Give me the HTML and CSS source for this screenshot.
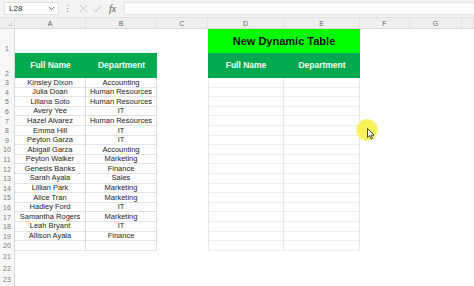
FILE: index.html
```html
<!DOCTYPE html>
<html>
<head>
<meta charset="utf-8">
<link rel="stylesheet" href="styles.css">
</head>
<body>
<div class="app">
  <div class="fbar">
    <div class="namebox"><span>L28</span><svg class="chev" width="7" height="5" viewBox="0 0 7 5"><path d="M0.8 1 L3.5 3.7 L6.2 1" fill="none" stroke="#666" stroke-width="1"/></svg></div>
    <div class="dots">⋮</div>
    <div class="ficons">
      <svg width="9" height="9" viewBox="0 0 9 9"><path d="M1 1 L8 8 M8 1 L1 8" stroke="#c4c4c4" stroke-width="1"/></svg>
      <svg width="10" height="9" viewBox="0 0 10 9"><path d="M1 5 L3.8 7.8 L9 1.2" fill="none" stroke="#c4c4c4" stroke-width="1"/></svg>
      <span class="fx">fx</span>
    </div>
    <div class="finput"></div>
  </div>
  <div class="sheet">
    <div class="row colhead">
      <div class="corner"></div><div>A</div><div>B</div><div>C</div><div>D</div><div>E</div><div>F</div><div>G</div><div></div>
    </div>
    <div class="row r1">
      <div class="rh">1</div><div class="c"></div><div class="c"></div><div class="c"></div><div class="c title">New Dynamic Table</div><div class="c"></div><div class="c"></div><div class="c"></div>
    </div>
    <div class="row r2">
      <div class="rh">2</div><div class="c hd">Full Name</div><div class="c hd">Department</div><div class="c"></div><div class="c hd">Full Name</div><div class="c hd">Department</div><div class="c"></div><div class="c"></div><div class="c"></div>
    </div>
    <div class="row"><div class="rh">3</div><div class="c t">Kinsley Dixon</div><div class="c t">Accounting</div><div class="c"></div><div class="c u"></div><div class="c u"></div><div class="c"></div><div class="c"></div><div class="c"></div></div>
    <div class="row"><div class="rh">4</div><div class="c t">Julia Doan</div><div class="c t">Human Resources</div><div class="c"></div><div class="c u"></div><div class="c u"></div><div class="c"></div><div class="c"></div><div class="c"></div></div>
    <div class="row"><div class="rh">5</div><div class="c t">Liliana Soto</div><div class="c t">Human Resources</div><div class="c"></div><div class="c u"></div><div class="c u"></div><div class="c"></div><div class="c"></div><div class="c"></div></div>
    <div class="row"><div class="rh">6</div><div class="c t">Avery Yee</div><div class="c t">IT</div><div class="c"></div><div class="c u"></div><div class="c u"></div><div class="c"></div><div class="c"></div><div class="c"></div></div>
    <div class="row"><div class="rh">7</div><div class="c t">Hazel Alvarez</div><div class="c t">Human Resources</div><div class="c"></div><div class="c u"></div><div class="c u"></div><div class="c"></div><div class="c"></div><div class="c"></div></div>
    <div class="row"><div class="rh">8</div><div class="c t">Emma Hill</div><div class="c t">IT</div><div class="c"></div><div class="c u"></div><div class="c u"></div><div class="c"></div><div class="c"></div><div class="c"></div></div>
    <div class="row"><div class="rh">9</div><div class="c t">Peyton Garza</div><div class="c t">IT</div><div class="c"></div><div class="c u"></div><div class="c u"></div><div class="c"></div><div class="c"></div><div class="c"></div></div>
    <div class="row"><div class="rh">10</div><div class="c t">Abigail Garza</div><div class="c t">Accounting</div><div class="c"></div><div class="c u"></div><div class="c u"></div><div class="c"></div><div class="c"></div><div class="c"></div></div>
    <div class="row"><div class="rh">11</div><div class="c t">Peyton Walker</div><div class="c t">Marketing</div><div class="c"></div><div class="c u"></div><div class="c u"></div><div class="c"></div><div class="c"></div><div class="c"></div></div>
    <div class="row"><div class="rh">12</div><div class="c t">Genesis Banks</div><div class="c t">Finance</div><div class="c"></div><div class="c u"></div><div class="c u"></div><div class="c"></div><div class="c"></div><div class="c"></div></div>
    <div class="row"><div class="rh">13</div><div class="c t">Sarah Ayala</div><div class="c t">Sales</div><div class="c"></div><div class="c u"></div><div class="c u"></div><div class="c"></div><div class="c"></div><div class="c"></div></div>
    <div class="row"><div class="rh">14</div><div class="c t">Lillian Park</div><div class="c t">Marketing</div><div class="c"></div><div class="c u"></div><div class="c u"></div><div class="c"></div><div class="c"></div><div class="c"></div></div>
    <div class="row"><div class="rh">15</div><div class="c t">Alice Tran</div><div class="c t">Marketing</div><div class="c"></div><div class="c u"></div><div class="c u"></div><div class="c"></div><div class="c"></div><div class="c"></div></div>
    <div class="row"><div class="rh">16</div><div class="c t">Hadley Ford</div><div class="c t">IT</div><div class="c"></div><div class="c u"></div><div class="c u"></div><div class="c"></div><div class="c"></div><div class="c"></div></div>
    <div class="row"><div class="rh">17</div><div class="c t">Samantha Rogers</div><div class="c t">Marketing</div><div class="c"></div><div class="c u"></div><div class="c u"></div><div class="c"></div><div class="c"></div><div class="c"></div></div>
    <div class="row"><div class="rh">18</div><div class="c t">Leah Bryant</div><div class="c t">IT</div><div class="c"></div><div class="c u"></div><div class="c u"></div><div class="c"></div><div class="c"></div><div class="c"></div></div>
    <div class="row"><div class="rh">19</div><div class="c t">Allison Ayala</div><div class="c t">Finance</div><div class="c"></div><div class="c u"></div><div class="c u"></div><div class="c"></div><div class="c"></div><div class="c"></div></div>
    <div class="row"><div class="rh">20</div><div class="c t"></div><div class="c t"></div><div class="c"></div><div class="c u"></div><div class="c u"></div><div class="c"></div><div class="c"></div><div class="c"></div></div>
    <div class="row tall"><div class="rh">21</div></div>
    <div class="row tall"><div class="rh">22</div></div>
    <div class="row tall"><div class="rh">23</div></div>
    <div class="row tall"><div class="rh"></div></div>
  </div>
  <div class="pointer">
    <svg width="8" height="12" viewBox="0 0 8 12"><path d="M0.5 0.5 L0.5 9.5 L2.6 7.6 L4.1 11 L5.5 10.4 L4.1 7.1 L7 7.1 Z" fill="#fff" stroke="#333" stroke-width="0.9" stroke-linejoin="round"/></svg>
  </div>
</div>
</body>
</html>
```

FILE: styles.css
```css
* { box-sizing: border-box; }
html, body { margin: 0; padding: 0; background: #fff; }
body { font-family: "Liberation Sans", Arial, sans-serif; overflow: hidden; }
.app { position: relative; width: 474px; height: 286px; overflow: hidden; }

.fbar {
  height: 18px;
  background: #f3f3f3;
  border-bottom: 1px solid #e2e2e2;
  display: flex;
  align-items: center;
  padding-left: 4px;
}
.namebox {
  width: 55px; height: 13px;
  background: #fff;
  border: 1px solid #e1e1e1;
  display: flex; align-items: center; justify-content: space-between;
  padding: 0 3px 0 4px;
  font-size: 8px; color: #333;
}
.dots { width: 14px; text-align: center; font-size: 9px; color: #777; margin-left: 1px; }
.ficons { display: flex; align-items: center; gap: 4px; padding-left: 5px; width: 50px; }
.fx { font-family: "Liberation Serif", serif; font-style: italic; font-size: 10px; color: #555; margin-left: 3px; }
.finput { flex: 1; height: 13px; background: #fff; border: 1px solid #e6e6e6; border-right: none; }

.row {
  display: grid;
  grid-template-columns: 15px 71px 71px 51px 76px 76px 50px 52px 12px;
  height: 9.6px;
}
.row.tall { height: 11.6px; }
.colhead {
  height: 11px;
  background: #efefef;
  border-bottom: 1px solid #dadada;
  font-size: 7px; color: #666;
}
.colhead > div { display: flex; align-items: center; justify-content: center; border-right: 1px solid #e2e2e2; }
.corner { position: relative; border-right: 1px solid #dadada !important; }
.corner::after {
  content: ""; position: absolute; right: 2px; bottom: 2px;
  border-left: 4px solid transparent; border-bottom: 4px solid #cfcfcf;
}
.rh {
  border-right: 1px solid #dadada;
  background: #f7f7f7;
  font-size: 7px; color: #777;
  display: flex; align-items: center; justify-content: center;
  line-height: 1;
}
.r1 { height: 24px; }
.r2 { height: 25px; }
.r1 .rh, .r2 .rh { align-items: flex-end; padding-bottom: 1px; }

.c { font-size: 7.5px; color: #222; display: flex; align-items: center; justify-content: center; white-space: nowrap; line-height: 1; }
.t { border-right: 1px solid #dcdcdc; border-bottom: 1px solid #e3e3e3; }
.u { border-right: 1px solid #e6e8ee; border-bottom: 1px solid #eceef3; }
.row > .u:nth-child(5) { border-left: 1px solid #e6e8ee; }

.title {
  grid-column: span 2;
  background: #00ff00;
  font-size: 11px; font-weight: bold; color: #111;
}
.hd {
  background: #00a94f;
  color: #f2fff5;
  font-size: 8.5px; font-weight: bold;
}

.pointer {
  position: absolute;
  left: 356px; top: 119px;
  width: 22px; height: 22px;
  border-radius: 50%;
  background: radial-gradient(circle, rgba(248,240,80,0.95) 55%, rgba(248,240,80,0.5) 80%, rgba(248,240,80,0) 100%);
}
.pointer svg { position: absolute; left: 11px; top: 9px; }
```
